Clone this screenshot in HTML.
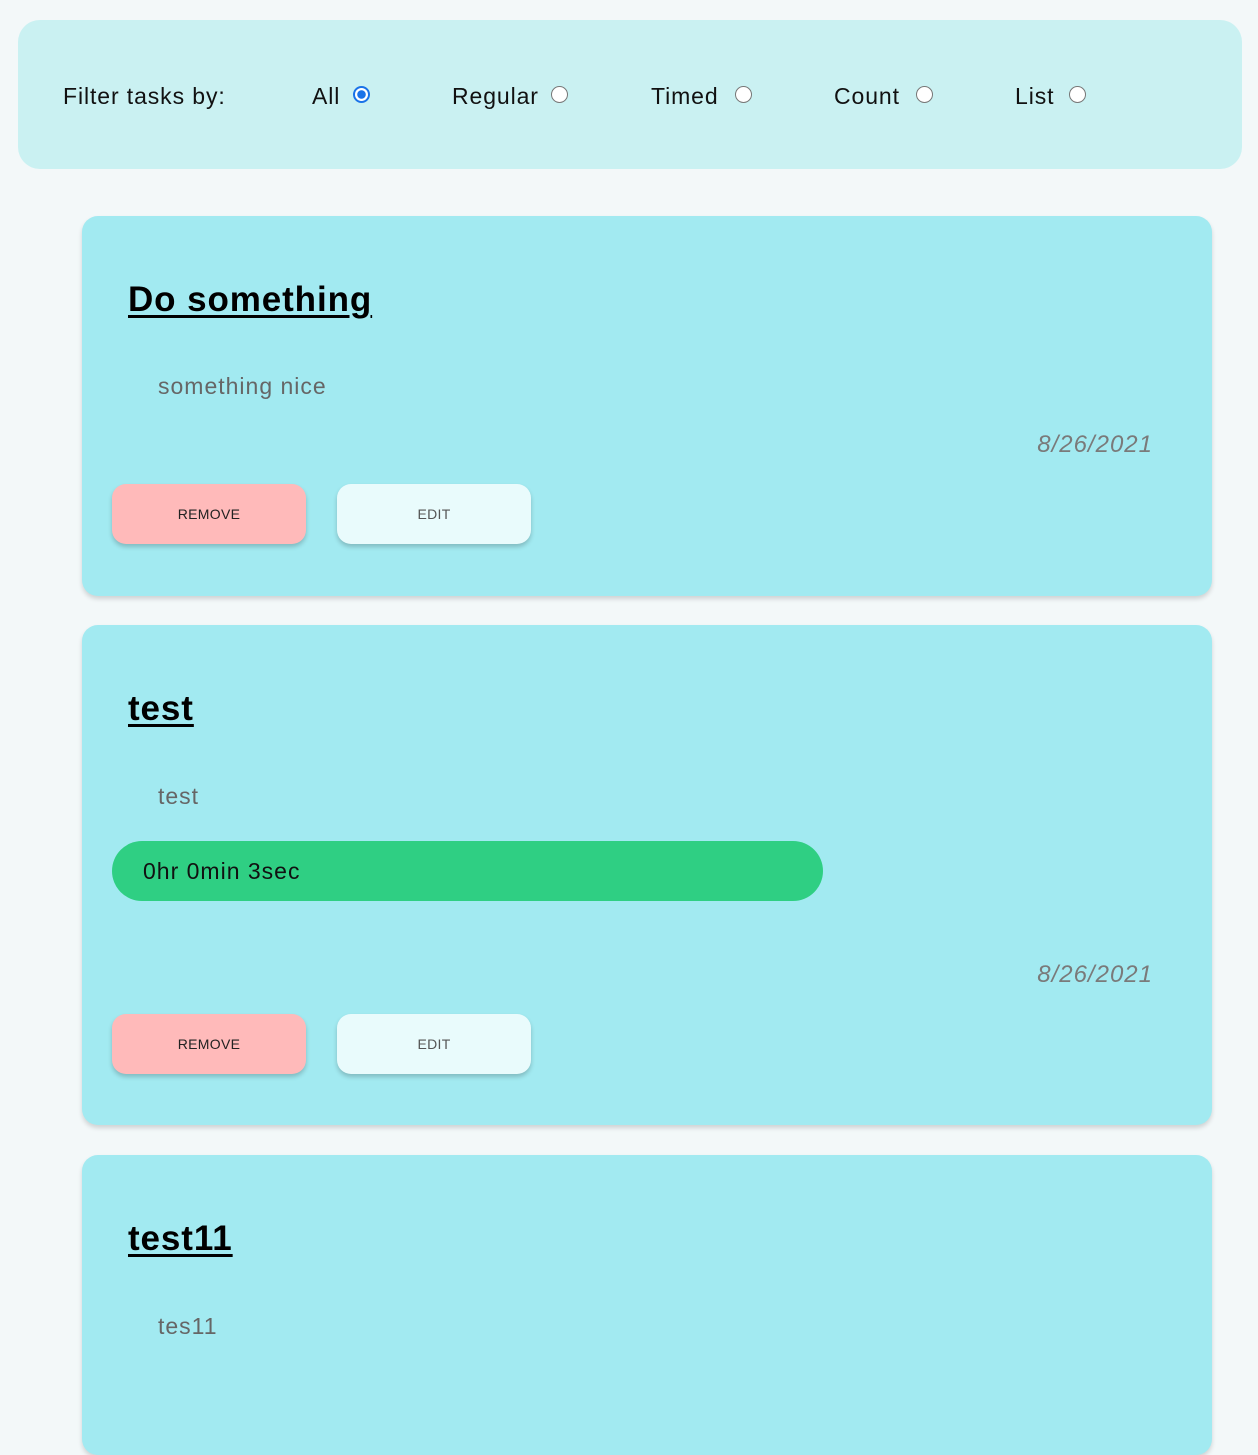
<!DOCTYPE html>
<html><head><meta charset="utf-8"><style>
*{margin:0;padding:0;box-sizing:border-box}
body{width:1258px;height:1362px;overflow:hidden;background:#f3f8f9;font-family:"Liberation Sans",sans-serif;position:relative}
.a{position:absolute;white-space:nowrap}
.hdr{left:18px;top:20px;width:1224px;height:149px;background:#caf1f2;border-radius:22px}
.lbl{font-size:23px;color:#111;line-height:23px;top:85px;letter-spacing:0.9px}
.r{position:absolute;top:86px;width:17px;height:17px;border-radius:50%;border:1.5px solid #777;background:#fff}
.r.on{border:2px solid #1a73e8;background:radial-gradient(circle,#1a73e8 0 4px,#fff 4.5px)}
.card{left:82px;width:1130px;background:#a2eaf1;border-radius:16px;box-shadow:0 3px 5px rgba(0,0,0,.15)}
.t{left:128px;font-size:35px;font-weight:bold;text-decoration:underline;text-decoration-thickness:3px;text-underline-offset:4px;color:#000;line-height:35px;letter-spacing:0.9px}
.d{left:158px;font-size:23px;color:#666;line-height:23px;letter-spacing:1px}
.dt{right:105px;font-size:24px;color:#7a7a7a;font-style:italic;line-height:24px;letter-spacing:1px}
.btn{width:194px;height:60px;border-radius:14px;font-size:14px;display:flex;align-items:center;justify-content:center;box-shadow:0 3px 5px rgba(0,0,0,.2);letter-spacing:0.3px}
.rm{left:112px;background:#ffbaba;color:#222}
.ed{left:337px;background:#e9fbfc;color:#555}
</style></head><body>
<div class="a hdr"></div>
<div class="a lbl" style="left:63px">Filter tasks by:</div>
<div class="a lbl" style="left:312px">All</div><div class="r on" style="left:353px"></div>
<div class="a lbl" style="left:452px">Regular</div><div class="r" style="left:551px"></div>
<div class="a lbl" style="left:651px">Timed</div><div class="r" style="left:735px"></div>
<div class="a lbl" style="left:834px">Count</div><div class="r" style="left:916px"></div>
<div class="a lbl" style="left:1015px">List</div><div class="r" style="left:1069px"></div>

<div class="a card" style="top:216px;height:380px"></div>
<div class="a t" style="top:282px">Do something</div>
<div class="a d" style="top:375px">something nice</div>
<div class="a dt" style="top:433px">8/26/2021</div>
<div class="a btn rm" style="top:484px">REMOVE</div>
<div class="a btn ed" style="top:484px">EDIT</div>

<div class="a card" style="top:625px;height:500px"></div>
<div class="a t" style="top:691px">test</div>
<div class="a d" style="top:785px">test</div>
<div class="a" style="left:112px;top:841px;width:711px;height:60px;border-radius:30px;background:#2fcf83;font-size:23px;color:#111;line-height:60px;padding-left:31px;letter-spacing:1px">0hr 0min 3sec</div>
<div class="a dt" style="top:963px">8/26/2021</div>
<div class="a btn rm" style="top:1014px">REMOVE</div>
<div class="a btn ed" style="top:1014px">EDIT</div>

<div class="a card" style="top:1155px;height:300px"></div>
<div class="a t" style="top:1221px">test11</div>
<div class="a d" style="top:1315px">tes11</div>
</body></html>
